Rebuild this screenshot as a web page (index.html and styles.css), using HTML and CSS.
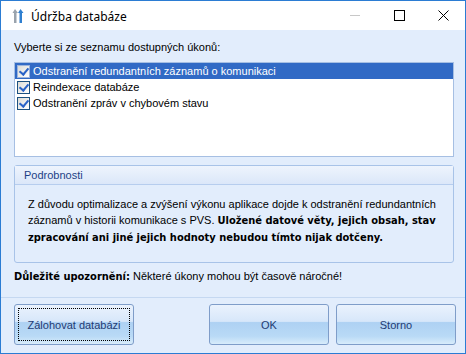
FILE: index.html
```html
<!DOCTYPE html>
<html lang="cs">
<head>
  <meta charset="UTF-8" />
  <title>Údržba databáze</title>
  <link rel="stylesheet" href="styles.css">
</head>
<body>

<div class="window">
  <div class="titlebar">
    <svg class="app-icon" width="12" height="16" viewBox="0 0 12 16">
      <path d="M3 1 L0.5 5 L2 5 L2 15 L4.5 15 L4.5 5 L6 5 Z" fill="#9aa3ad"/>
      <path d="M8.5 1 L6 5 L7.5 5 L7.5 15 L10 15 L10 5 L11.5 5 Z" fill="#2f7fd0"/>
    </svg>
    <span class="title">Údržba databáze</span>
    <div class="controls">
      <span class="ctl"><svg width="11" height="11" viewBox="0 0 11 11"><path d="M0 5.5 H10" stroke="#c8c8c8" stroke-width="1"/></svg></span>
      <span class="ctl"><svg width="11" height="11" viewBox="0 0 11 11"><rect x="0.5" y="0.5" width="10" height="10" fill="none" stroke="#000"/></svg></span>
      <span class="ctl"><svg width="11" height="11" viewBox="0 0 11 11"><path d="M0.5 0.5 L10.5 10.5 M10.5 0.5 L0.5 10.5" stroke="#000" stroke-width="1"/></svg></span>
    </div>
  </div>

  <div class="client">
    <div class="label">Vyberte si ze seznamu dostupných úkonů:</div>

    <div class="listbox">
      <div class="item selected"><span class="check"></span>Odstranění redundantních záznamů o komunikaci</div>
      <div class="item"><span class="check"></span>Reindexace databáze</div>
      <div class="item"><span class="check"></span>Odstranění zpráv v chybovém stavu</div>
    </div>

    <div class="group">
      <div class="group-head">Podrobnosti</div>
      <div class="group-body">
        Z důvodu optimalizace a zvýšení výkonu aplikace dojde k odstranění redundantních<br>
        záznamů v historii komunikace s PVS. <b>Uložené datové věty, jejich obsah, stav<br>
        zpracování ani jiné jejich hodnoty nebudou tímto nijak dotčeny.</b>
      </div>
    </div>

    <div class="note"><b>Důležité upozornění:</b> Některé úkony mohou být časově náročné!</div>
  </div>

  <div class="footer">
    <button class="btn focused"><span>Zálohovat databázi</span></button>
    <div class="spacer"></div>
    <button class="btn"><span>OK</span></button>
    <button class="btn"><span>Storno</span></button>
  </div>
</div>

</body>
</html>
```

FILE: styles.css
```css
* { margin: 0; padding: 0; box-sizing: border-box; }
body { width: 466px; height: 354px; overflow: hidden; background: #fff; font-family: 'Liberation Sans', Arial, sans-serif; font-size: 11px; color: #000; }
b { font-family: 'DejaVu Sans Condensed', 'DejaVu Sans', sans-serif; font-weight: bold; font-size: 11px; }

.window {
  width: 466px; height: 354px; border: 1px solid #2b7cd3;
  background: #e2edfc; display: flex; flex-direction: column;
}
.titlebar {
  height: 29px; background: #fff; display: flex; align-items: center;
  padding-left: 11px;
}
.app-icon { margin-top: 1px; }
.title { font-family: 'Noto Sans', sans-serif; font-size: 12px; margin-left: 7px; margin-top: 1px; }
.controls { margin-left: auto; display: flex; }
.ctl { width: 44px; height: 29px; display: flex; align-items: center; justify-content: center; }
.ctl svg { display: block; }

.client { padding: 0 11px 0 13px; }
.label { margin-top: 10px; line-height: 14px; margin-bottom: 8px; }

.listbox {
  height: 95px; background: #fff; border: 1px solid #a6bfe3;
}
.item {
  height: 16px; line-height: 16px; display: flex; align-items: center;
  padding-left: 2px;
}
.item.selected { background: #316ac5; color: #fff; }
.check {
  width: 13px; height: 13px; margin-right: 3px;
  border: 1px solid #1c5180; background: linear-gradient(135deg, #dcdcd7, #fff);
  position: relative;
}
.check::after {
  content: ""; position: absolute; left: 3px; top: 0px; width: 4px; height: 7px;
  border: solid #2a63c7; border-width: 0 2px 2px 0; transform: rotate(40deg);
}
.item.selected .check { border-color: #9cb4dd; }

.group {
  margin-top: 8px; border: 1px solid #a8c3e8; border-radius: 3px;
  height: 98px;
}
.group-head {
  height: 19px; line-height: 18px; padding-left: 9px; color: #1d3f86;
  background: linear-gradient(#eef4fd, #dbe7f9);
  border-bottom: 1px solid #b6cdee;
}
.group-body { padding: 11px 0 0 13px; line-height: 16px; }

.note { margin-top: 6px; line-height: 14px; }

.footer {
  margin-top: auto; border-top: 1px solid #c5d8f1; height: 56px;
  display: flex; padding: 6px 9px 0 13px; gap: 7px;
}
.spacer { flex: 1; }
.btn {
  width: 120px; height: 41px; border: 1px solid #7f9dc9; border-radius: 3px;
  font-family: 'Liberation Sans', Arial, sans-serif; font-size: 11px; color: #1e3b73;
  background: linear-gradient(#eaf2fd 0%, #d7e7fa 42%, #aed1f3 45%, #b9daf6 80%, #d8ecfb 100%);
  padding: 3px;
}
.btn span { display: flex; align-items: center; justify-content: center; height: 100%; border: 1px dotted transparent; }
.btn.focused span { border-color: #000; }
```
